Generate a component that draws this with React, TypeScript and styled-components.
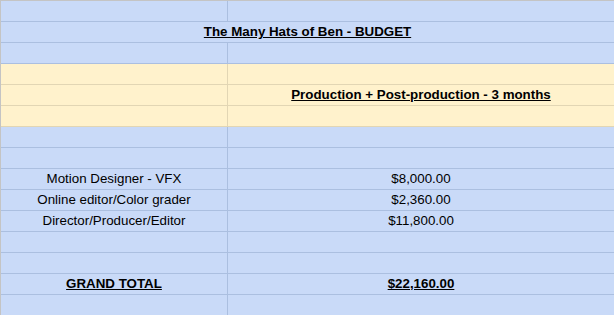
import React from "react";
import styled, { createGlobalStyle } from "styled-components";

const GlobalStyle = createGlobalStyle`
  html, body {
    margin: 0;
    padding: 0;
    background: #ffffff;
    overflow: hidden;
  }
  body {
    font-family: "Liberation Sans", Arial, sans-serif;
    font-size: 13.33px;
    color: #000000;
  }
`;

type Tone = "blue" | "yellow";

const palette = {
  blue: { bg: "#c9daf8", line: "#abbfe0" },
  yellow: { bg: "#fff2cc", line: "#e2d6b4" },
};

const Sheet = styled.div`
  width: 614px;
  height: 315px;
  overflow: hidden;
  border-top: 1px solid #c4c4c4;
  border-left: 1px solid #c4c4c4;
  box-sizing: border-box;
`;

const Row = styled.div<{ $tone: Tone; $merged?: boolean }>`
  display: grid;
  grid-template-columns: ${(p) => (p.$merged ? "1fr" : "227px 1fr")};
  height: 21px;
  box-sizing: border-box;
  background: ${(p) => palette[p.$tone].bg};
  border-bottom: 1px solid ${(p) => palette[p.$tone].line};
`;

const Cell = styled.div<{ $tone: Tone; $divider?: boolean; $bold?: boolean }>`
  height: 20px;
  line-height: 20px;
  text-align: center;
  white-space: nowrap;
  overflow: hidden;
  border-right: ${(p) =>
    p.$divider ? `1px solid ${palette[p.$tone].line}` : "none"};
  font-weight: ${(p) => (p.$bold ? 700 : 400)};
  text-decoration: ${(p) => (p.$bold ? "underline" : "none")};
`;

type RowData = {
  tone: Tone;
  left?: string;
  right?: string;
  merged?: string;
  bold?: boolean;
};

const rows: RowData[] = [
  { tone: "blue" },
  { tone: "blue", merged: "The Many Hats of Ben - BUDGET", bold: true },
  { tone: "blue" },
  { tone: "yellow" },
  {
    tone: "yellow",
    right: "Production + Post-production - 3 months",
    bold: true,
  },
  { tone: "yellow" },
  { tone: "blue" },
  { tone: "blue" },
  { tone: "blue", left: "Motion Designer - VFX", right: "$8,000.00" },
  { tone: "blue", left: "Online editor/Color grader", right: "$2,360.00" },
  { tone: "blue", left: "Director/Producer/Editor", right: "$11,800.00" },
  { tone: "blue" },
  { tone: "blue" },
  { tone: "blue", left: "GRAND TOTAL", right: "$22,160.00", bold: true },
  { tone: "blue" },
];

export default function App() {
  return (
    <>
      <GlobalStyle />
      <Sheet>
        {rows.map((r, i) =>
          r.merged ? (
            <Row key={i} $tone={r.tone} $merged>
              <Cell $tone={r.tone} $bold={r.bold}>
                {r.merged}
              </Cell>
            </Row>
          ) : (
            <Row key={i} $tone={r.tone}>
              <Cell $tone={r.tone} $divider $bold={r.bold && !!r.left}>
                {r.left}
              </Cell>
              <Cell $tone={r.tone} $bold={r.bold}>
                {r.right}
              </Cell>
            </Row>
          )
        )}
      </Sheet>
    </>
  );
}
